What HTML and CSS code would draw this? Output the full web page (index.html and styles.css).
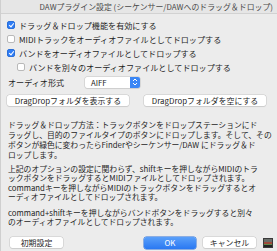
FILE: index.html
```html
<!DOCTYPE html>
<html lang="ja">
<head>
  <meta charset="UTF-8" />
  <title>DAWプラグイン設定</title>
  <link rel="stylesheet" href="styles.css">
</head>
<body>
  <div class="window">
    <div class="titlebar">DAWプラグイン設定 (シーケンサー/DAWへのドラッグ＆ドロップ)</div>

    <div class="content">
      <label class="row"><span class="box checked"></span>ドラッグ＆ドロップ機能を有効にする</label>
      <label class="row"><span class="box"></span>MIDIトラックをオーディオファイルとしてドロップする</label>
      <label class="row"><span class="box checked"></span>バンドをオーディオファイルとしてドロップする</label>
      <label class="row indent"><span class="box"></span>バンドを別々のオーディオファイルとしてドロップする</label>

      <div class="row format">
        <span class="format-label">オーディオ形式</span>
        <div class="select">
          <span>AIFF</span>
          <span class="select-arrow">
            <svg width="6" height="8" viewBox="0 0 6 8"><path d="M1 3 L3 1 L5 3 M1 5 L3 7 L5 5" fill="none" stroke="#fff" stroke-width="1"/></svg>
          </span>
        </div>
      </div>

      <div class="folder-btns">
        <button class="btn">DragDropフォルダを表示する</button>
        <button class="btn">DragDropフォルダを空にする</button>
      </div>

      <p class="help p1">ドラッグ＆ドロップ方法：トラックボタンをドロップステーションにド<br>ラッグし、目的のファイルタイプのボタンにドロップします。そして、その<br>ボタンが緑色に変わったらFinderやシーケンサー/DAW にドラッグ＆ド<br>ロップします。</p>
      <p class="help p2">上記のオプションの設定に関わらず、shiftキーを押しながらMIDIのトラ<br>ックボタンをドラッグするとMIDIファイルとしてドロップされます。<br>commandキーを押しながらMIDIのトラックボタンをドラッグするとオ<br>ーディオファイルとしてドロップされます。</p>
      <p class="help p3">command+shiftキーを押しながらバンドボタンをドラッグすると別々<br>のオーディオファイルとしてドロップされます。</p>
    </div>

    <div class="footer">
      <button class="btn reset">初期設定</button>
      <div class="footer-right">
        <button class="btn ok">OK</button>
        <button class="btn cancel">キャンセル</button>
        <svg class="thumb" width="10" height="10" viewBox="0 0 10 10">
          <rect width="10" height="10" fill="#3a3a3a"/>
          <rect x="1" y="1" width="8" height="3" fill="#6a6f6a"/>
          <rect x="1" y="4" width="8" height="2" fill="#a04a3a"/>
          <rect x="1" y="6" width="8" height="1" fill="#5f8a4a"/>
          <rect x="1" y="7" width="8" height="2" fill="#222"/>
        </svg>
      </div>
    </div>
  </div>
</body>
</html>
```

FILE: styles.css
```css
html, body {
  margin: 0;
  padding: 0;
  background: #ececec;
  font-family: "Noto Sans CJK JP", "Noto Sans", sans-serif;
  color: #1e1e1e;
}
.window {
  width: 277px;
  height: 251px;
  overflow: hidden;
  box-sizing: border-box;
  border-left: 1px solid #cfcfcf;
  display: flex;
  flex-direction: column;
}
.titlebar {
  height: 13px;
  line-height: 13px;
  font-size: 7.9px;
  color: #4a4a4a;
  text-align: right;
  padding-right: 4px;
  background: #e6e6e6;
  border-bottom: 1px solid #d2d2d2;
  white-space: nowrap;
}
.content {
  padding: 4px 0 0 6px;
  font-size: 8.1px;
}
.row {
  display: flex;
  align-items: center;
  height: 14px;
  white-space: nowrap;
}
.row.indent {
  padding-left: 10px;
}
.box {
  width: 8px;
  height: 8px;
  box-sizing: border-box;
  border: 1px solid #b9b9b9;
  border-radius: 2px;
  background: #fff;
  margin-right: 4px;
  flex: none;
  position: relative;
}
.box.checked {
  background: #2f7df6;
  border-color: #2a6fd8;
}
.box.checked::after {
  content: "";
  position: absolute;
  left: 2px;
  top: 0px;
  width: 2px;
  height: 4px;
  border: solid #fff;
  border-width: 0 1px 1px 0;
  transform: rotate(40deg);
}
.format {
  margin-top: 1px;
}
.format-label {
  width: 77px;
  padding-left: 1px;
}
.select {
  width: 55px;
  height: 11px;
  background: #fff;
  border-radius: 2px;
  box-shadow: 0 0 0 0.5px #c4c4c4, 0 1px 1px rgba(0,0,0,0.08);
  display: flex;
  align-items: center;
  justify-content: space-between;
  padding-left: 6px;
  box-sizing: border-box;
  font-size: 7.8px;
}
.select-arrow {
  width: 10px;
  height: 11px;
  background: #3a86f5;
  border-radius: 0 2px 2px 0;
  display: flex;
  align-items: center;
  justify-content: center;
}
.btn {
  font-family: inherit;
  font-size: 7.9px;
  color: #1e1e1e;
  background: #fff;
  border: none;
  border-radius: 2.5px;
  box-shadow: 0 0 0 0.5px #c6c6c6, 0 1px 1px rgba(0,0,0,0.1);
  height: 11px;
  line-height: 11px;
  padding: 0;
  margin: 0;
  white-space: nowrap;
}
.folder-btns {
  display: flex;
  justify-content: space-between;
  margin-top: 6px;
  padding-right: 11px;
}
.folder-btns .btn {
  width: 122px;
}
.help {
  margin: 0;
  font-size: 7.8px;
  line-height: 9.9px;
  white-space: nowrap;
  padding-left: 1px;
}
.p1 {
  margin-top: 14px;
}
.p2 {
  margin-top: 4px;
  line-height: 9.5px;
}
.p3 {
  margin-top: 6px;
  line-height: 9.5px;
}
.footer {
  margin-top: auto;
  display: flex;
  justify-content: space-between;
  align-items: center;
  padding: 0 4px 2px 9px;
  height: 13px;
}
.reset {
  width: 53px;
}
.footer-right {
  display: flex;
  align-items: center;
}
.ok {
  width: 52px;
  height: 12px;
  background: linear-gradient(#5aa0fa, #2a78f2);
  color: #fff;
  box-shadow: 0 0 0 0.5px #2a6fd8;
  margin-right: 7px;
}
.cancel {
  width: 53px;
  margin-right: 7px;
}
.thumb {
  display: block;
}
```
